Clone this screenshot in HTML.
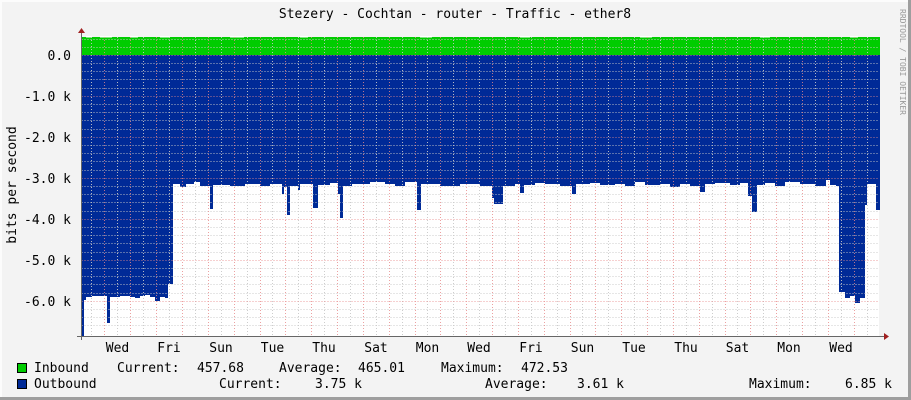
<!DOCTYPE html>
<html><head><meta charset="utf-8"><style>
html,body{margin:0;padding:0;background:#f3f3f3}
svg{display:block}
text{font-family:"DejaVu Sans Mono","Liberation Mono",monospace;font-size:13px;fill:#000}
</style></head><body>
<svg width="911" height="400" viewBox="0 0 911 400" xmlns="http://www.w3.org/2000/svg">
<rect x="0" y="0" width="911" height="400" fill="#f3f3f3"/>
<rect x="0" y="0" width="911" height="2" fill="#fcfcfc"/>
<rect x="0" y="0" width="2" height="400" fill="#fcfcfc"/>
<rect x="908" y="0" width="3" height="400" fill="#9e9e9e"/>
<rect x="0" y="397" width="911" height="3" fill="#9e9e9e"/>
<rect x="81" y="37" width="798" height="299" fill="#fff"/>
<polygon fill="#00cc00" points="81,55 81,37 880,37 880,55"/>
<g fill="#fff">
<rect x="86" y="36" width="6" height="1.5"/><rect x="100" y="36" width="12" height="1.5"/><rect x="130" y="36" width="8" height="1.5"/><rect x="160" y="36" width="10" height="1.5"/><rect x="230" y="36" width="14" height="1.5"/><rect x="300" y="36" width="8" height="1.5"/><rect x="420" y="36" width="12" height="1.5"/><rect x="520" y="36" width="10" height="1.5"/><rect x="640" y="36" width="12" height="1.5"/><rect x="760" y="36" width="10" height="1.5"/><rect x="850" y="36" width="8" height="1.5"/>
</g>
<polygon fill="#002a97" points="81,55 81,336 84,336 84,300 86,300 86,297 92,297 92,296 107,296 107,323 110,323 110,297 120,297 120,296 130,296 130,297 135,297 135,298 140,298 140,296 145,296 145,295 150,295 150,297 155,297 155,301 160,301 160,297 165,297 165,298 168,298 168,284 173,284 173,184 180,184 180,187 186,187 186,184 194,184 194,182 200,182 200,186 210,186 210,209 213,209 213,185 230,185 230,186 245,186 245,184 260,184 260,186 270,186 270,184 282,184 282,194 284,194 284,187 287,187 287,215 290,215 290,186 298,186 298,190 300,190 300,184 313,184 313,208 318,208 318,185 330,185 330,183 338,183 338,194 340,194 340,218 343,218 343,186 352,186 352,184 370,184 370,182 385,182 385,184 395,184 395,186 405,186 405,182 417,182 417,210 421,210 421,184 440,184 440,186 460,186 460,184 480,184 480,186 492,186 492,198 494,198 494,204 503,204 503,186 515,186 515,184 520,184 520,193 524,193 524,185 535,185 535,183 545,183 545,184 560,184 560,186 572,186 572,194 576,194 576,184 590,184 590,183 600,183 600,185 615,185 615,184 625,184 625,186 635,186 635,182 645,182 645,185 660,185 660,184 670,184 670,187 680,187 680,184 690,184 690,186 700,186 700,192 705,192 705,184 715,184 715,183 730,183 730,185 740,185 740,183 748,183 748,196 752,196 752,212 757,212 757,185 765,185 765,183 775,183 775,186 785,186 785,182 800,182 800,184 815,184 815,186 826,186 826,180 830,180 830,185 836,185 836,186 839,186 839,292 845,292 845,298 850,298 850,296 855,296 855,303 860,303 860,298 865,298 865,205 867,205 867,184 876,184 876,210 880,210 880,55"/>
<g stroke="#c8c8c8" stroke-width="1" stroke-dasharray="1,2" opacity="0.9">
<path d="M81.5 63.5H879M81.5 71.5H879M81.5 79.5H879M81.5 88.5H879M81.5 104.5H879M81.5 112.5H879M81.5 120.5H879M81.5 129.5H879M81.5 145.5H879M81.5 153.5H879M81.5 161.5H879M81.5 170.5H879M81.5 186.5H879M81.5 194.5H879M81.5 202.5H879M81.5 211.5H879M81.5 227.5H879M81.5 235.5H879M81.5 243.5H879M81.5 252.5H879M81.5 268.5H879M81.5 276.5H879M81.5 284.5H879M81.5 293.5H879M81.5 309.5H879M81.5 317.5H879M81.5 325.5H879M81.5 47.5H879M81.5 39.5H879"/>
<path d="M91.5 37V336M117.5 37V336M143.5 37V336M169.5 37V336M195.5 37V336M221.5 37V336M247.5 37V336M272.5 37V336M298.5 37V336M324.5 37V336M350.5 37V336M376.5 37V336M402.5 37V336M427.5 37V336M453.5 37V336M479.5 37V336M505.5 37V336M531.5 37V336M557.5 37V336M582.5 37V336M608.5 37V336M634.5 37V336M660.5 37V336M686.5 37V336M712.5 37V336M737.5 37V336M763.5 37V336M789.5 37V336M815.5 37V336M841.5 37V336M867.5 37V336"/>
</g>
<g stroke="#e88a8a" stroke-width="1" stroke-dasharray="1,2" opacity="0.8">
<path d="M81.5 55.5H879M81.5 96.5H879M81.5 137.5H879M81.5 178.5H879M81.5 219.5H879M81.5 260.5H879M81.5 301.5H879"/>
<path d="M104.5 37V336M130.5 37V336M156.5 37V336M182.5 37V336M208.5 37V336M234.5 37V336M260.5 37V336M285.5 37V336M311.5 37V336M337.5 37V336M363.5 37V336M389.5 37V336M415.5 37V336M440.5 37V336M466.5 37V336M492.5 37V336M518.5 37V336M544.5 37V336M570.5 37V336M595.5 37V336M621.5 37V336M647.5 37V336M673.5 37V336M699.5 37V336M725.5 37V336M750.5 37V336M776.5 37V336M802.5 37V336M828.5 37V336M854.5 37V336"/>
</g>
<path d="M77 336.5H884M81.5 340V33" stroke="#666" stroke-width="1"/>
<polygon points="884,333 889,336.5 884,340" fill="#a02020"/>
<polygon points="78,33 81.5,28 85,33" fill="#a02020"/>
<text x="455" y="18" text-anchor="middle">Stezery - Cochtan - router - Traffic - ether8</text>
<text x="0" y="0" transform="translate(900,9) rotate(90)" style="font-size:8px;fill:#999">RRDTOOL / TOBI OETIKER</text>
<text x="0" y="0" transform="translate(16,185) rotate(-90)" text-anchor="middle">bits per second</text>
<g text-anchor="end">
<text x="71" y="60">0.0</text>
<text x="71" y="101">-1.0 k</text>
<text x="71" y="142">-2.0 k</text>
<text x="71" y="183">-3.0 k</text>
<text x="71" y="224">-4.0 k</text>
<text x="71" y="265">-5.0 k</text>
<text x="71" y="306">-6.0 k</text>
</g>
<g text-anchor="middle">
<text x="117.5" y="352">Wed</text><text x="169" y="352">Fri</text><text x="221" y="352">Sun</text><text x="272.5" y="352">Tue</text><text x="324" y="352">Thu</text><text x="376" y="352">Sat</text><text x="427.5" y="352">Mon</text><text x="479" y="352">Wed</text><text x="531" y="352">Fri</text><text x="582.5" y="352">Sun</text><text x="634" y="352">Tue</text><text x="686" y="352">Thu</text><text x="737.5" y="352">Sat</text><text x="789" y="352">Mon</text><text x="841" y="352">Wed</text>
</g>
<rect x="17.5" y="363.5" width="9" height="9" fill="#00cc00" stroke="#000"/>
<rect x="17.5" y="379.5" width="9" height="9" fill="#002a97" stroke="#000"/>
<text x="34" y="372">Inbound</text>
<text x="117" y="372">Current:</text><text x="197" y="372">457.68</text>
<text x="279" y="372">Average:</text><text x="358" y="372">465.01</text>
<text x="441" y="372">Maximum:</text><text x="521" y="372">472.53</text>
<text x="34" y="388">Outbound</text>
<text x="219" y="388">Current:</text><text x="315" y="388">3.75 k</text>
<text x="485" y="388">Average:</text><text x="577" y="388">3.61 k</text>
<text x="749" y="388">Maximum:</text><text x="845" y="388">6.85 k</text>
</svg>
</body></html>
